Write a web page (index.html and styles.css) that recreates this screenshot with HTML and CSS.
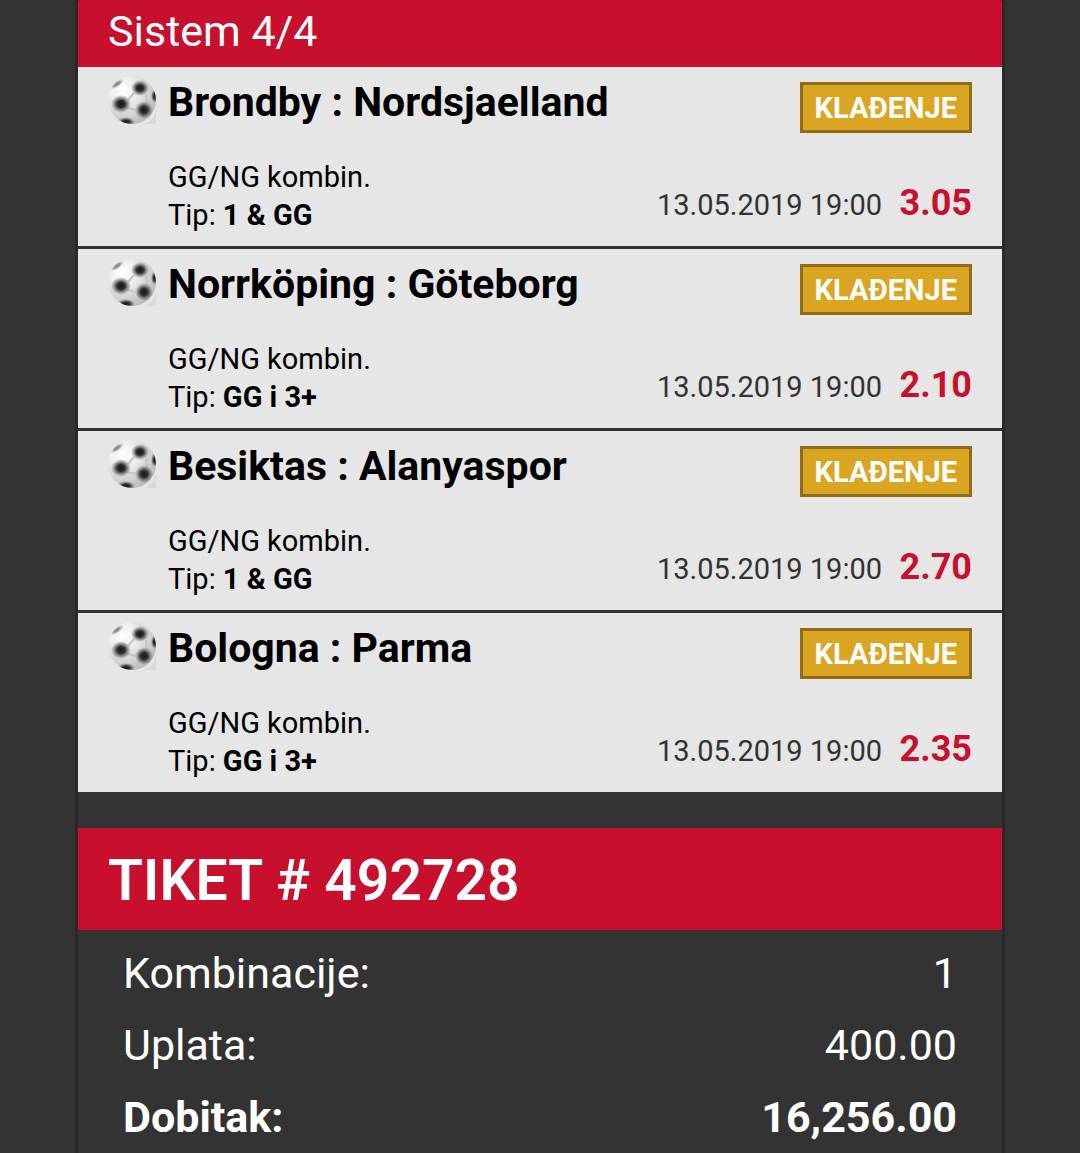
FILE: index.html
```html
<!DOCTYPE html>
<html lang="sr-Latn">
<head>
    <meta charset="UTF-8">
    <meta name="viewport" content="width=device-width, initial-scale=1.0">
    <title>Tiket # 492728</title>
    <link rel="stylesheet" href="styles.css">
</head>
<body>
    <!-- Lopta, koristi se u svakom redu -->
    <svg class="sprite" width="0" height="0" aria-hidden="true">
        <defs>
            <radialGradient id="ballFill" cx="0.32" cy="0.3" r="0.8">
                <stop offset="0" stop-color="#ffffff"/>
                <stop offset="0.35" stop-color="#ededee"/>
                <stop offset="0.7" stop-color="#cfd0d3"/>
                <stop offset="1" stop-color="#b4b4b7"/>
            </radialGradient>
            <radialGradient id="spotFill">
                <stop offset="0" stop-color="#161616"/>
                <stop offset="0.4" stop-color="#303030"/>
                <stop offset="1" stop-color="#5a5a5a" stop-opacity="0"/>
            </radialGradient>
            <clipPath id="ballClip"><path d="M24 0A24 24 0 0 0 24 48H48V24A24 24 0 0 0 24 0Z"/></clipPath>
        </defs>
        <symbol id="ball" viewBox="0 0 48 48">
            <g clip-path="url(#ballClip)">
                <path d="M36 48Q46 44 48 34V48Z" fill="#dadada"/>
                <circle cx="24" cy="24" r="24" fill="url(#ballFill)"/>
                <path d="M20 24L26 17M19 32L28 34M38 18L39 28" stroke="#c4c4c7" stroke-width="2" fill="none"/>
                <ellipse cx="32" cy="12" rx="9" ry="8" fill="url(#spotFill)"/>
                <ellipse cx="13" cy="28" rx="10" ry="9" fill="url(#spotFill)"/>
                <ellipse cx="36" cy="34" rx="9" ry="9" fill="url(#spotFill)"/>
                <ellipse cx="18" cy="46" rx="9" ry="5" fill="url(#spotFill)"/>
                <ellipse cx="47" cy="20" rx="4" ry="7" fill="url(#spotFill)"/>
                <ellipse cx="9" cy="8" rx="8" ry="3" fill="url(#spotFill)" opacity="0.5" transform="rotate(-35 9 8)"/>
            </g>
        </symbol>
    </svg>

    <main class="ticket">
        <h2 class="system-title">Sistem 4/4</h2>

        <ul class="matches">
            <li class="match">
                <div class="match-head">
                    <svg class="ball"><use href="#ball"/></svg>
                    <h3 class="teams">Brondby : Nordsjaelland</h3>
                    <span class="badge">KLAĐENJE</span>
                </div>
                <div class="match-info">
                    <div class="bet">
                        <p>GG/NG kombin.</p>
                        <p>Tip: <strong>1 &amp; GG</strong></p>
                    </div>
                    <time class="date" datetime="2019-05-13T19:00">13.05.2019 19:00</time>
                    <span class="odds">3.05</span>
                </div>
            </li>
            <li class="match">
                <div class="match-head">
                    <svg class="ball"><use href="#ball"/></svg>
                    <h3 class="teams">Norrköping : Göteborg</h3>
                    <span class="badge">KLAĐENJE</span>
                </div>
                <div class="match-info">
                    <div class="bet">
                        <p>GG/NG kombin.</p>
                        <p>Tip: <strong>GG i 3+</strong></p>
                    </div>
                    <time class="date" datetime="2019-05-13T19:00">13.05.2019 19:00</time>
                    <span class="odds">2.10</span>
                </div>
            </li>
            <li class="match">
                <div class="match-head">
                    <svg class="ball"><use href="#ball"/></svg>
                    <h3 class="teams">Besiktas : Alanyaspor</h3>
                    <span class="badge">KLAĐENJE</span>
                </div>
                <div class="match-info">
                    <div class="bet">
                        <p>GG/NG kombin.</p>
                        <p>Tip: <strong>1 &amp; GG</strong></p>
                    </div>
                    <time class="date" datetime="2019-05-13T19:00">13.05.2019 19:00</time>
                    <span class="odds">2.70</span>
                </div>
            </li>
            <li class="match">
                <div class="match-head">
                    <svg class="ball"><use href="#ball"/></svg>
                    <h3 class="teams">Bologna : Parma</h3>
                    <span class="badge">KLAĐENJE</span>
                </div>
                <div class="match-info">
                    <div class="bet">
                        <p>GG/NG kombin.</p>
                        <p>Tip: <strong>GG i 3+</strong></p>
                    </div>
                    <time class="date" datetime="2019-05-13T19:00">13.05.2019 19:00</time>
                    <span class="odds">2.35</span>
                </div>
            </li>
        </ul>

        <h1 class="ticket-title">TIKET # 492728</h1>

        <dl class="summary">
            <div class="summary-row">
                <dt>Kombinacije:</dt>
                <dd>1</dd>
            </div>
            <div class="summary-row">
                <dt>Uplata:</dt>
                <dd>400.00</dd>
            </div>
            <div class="summary-row total">
                <dt>Dobitak:</dt>
                <dd>16,256.00</dd>
            </div>
        </dl>
    </main>
</body>
</html>
```
FILE: styles.css
```css
* {
    box-sizing: border-box;
    margin: 0;
    padding: 0;
}

body {
    background-color: #333;
    color: #fff;
    font-family: Roboto, "Liberation Sans", sans-serif;
    padding: 0 75px;
}

.sprite {
    position: absolute;
}

.ticket {
    border: solid #292929;
    border-width: 0 3px;
}

/* Zaglavlje sistema */
.system-title {
    background-color: #c8102e;
    border-radius: 2px 2px 0 0;
    font-size: 43px;
    font-weight: 400;
    line-height: 62px;
    padding: 0 30px 5px;
}

/* Utakmice */
.matches {
    list-style: none;
}

.match {
    background-color: #e6e6e6;
    color: #000;
    padding: 9px 30px 12px;
}

.match + .match {
    border-top: 3px solid #333;
}

.match-head {
    display: flex;
    align-items: flex-start;
    height: 81px;
    border-bottom: 2px solid #e4e4e4;
}

.ball {
    flex: none;
    width: 48px;
    height: 48px;
    margin-right: 12px;
}

.teams {
    flex: 1;
    font-size: 41px;
    font-weight: 700;
    line-height: 52px;
}

.badge {
    background-color: #daa520;
    border: 3px solid #8f6c15;
    color: #fff;
    font-size: 29px;
    font-weight: 700;
    line-height: 43px;
    margin-top: 6px;
    padding: 2px 12px 0;
}

.match-info {
    display: flex;
    align-items: center;
    padding: 1px 0 0 60px;
}

.bet {
    flex: 1;
    font-size: 29px;
    font-weight: 400;
    line-height: 38px;
}

.date {
    color: #333;
    font-size: 29px;
    line-height: 38px;
    margin-top: 18px;
}

.odds {
    color: #c8102e;
    font-size: 36px;
    font-weight: 700;
    line-height: 38px;
    margin-top: 14px;
    min-width: 90px;
    text-align: right;
}

/* Tiket */
.ticket-title {
    background-color: #c8102e;
    font-size: 57px;
    font-weight: 600;
    line-height: 98px;
    margin-top: 36px;
    padding: 4px 30px 0;
}

.summary {
    padding: 7px 45px 0;
}

.summary-row {
    display: flex;
    justify-content: space-between;
    font-size: 43px;
    line-height: 72px;
}

.total {
    font-weight: 700;
}
```
